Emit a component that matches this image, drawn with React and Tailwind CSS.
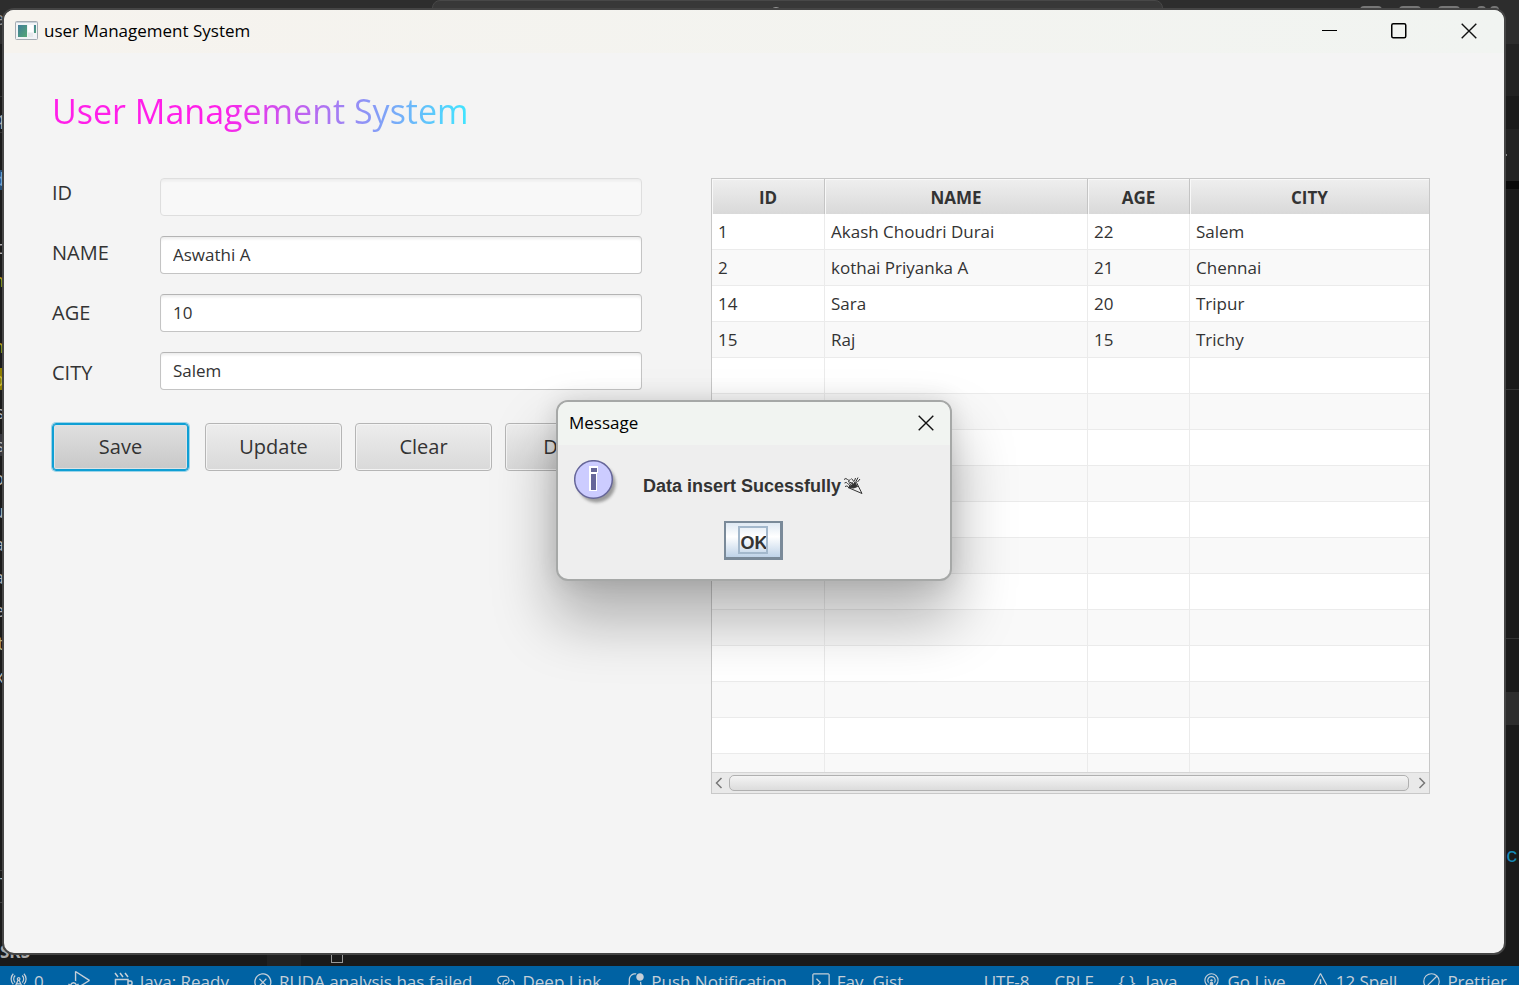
import React from "react";
import {
  VscRadioTower,
  VscDebugAlt,
  VscError,
  VscLink,
  VscBellDot,
  VscTerminal,
  VscBroadcast,
  VscWarning,
  VscCircleSlash,
} from "react-icons/vsc";

const users = [
  { id: "1", name: "Akash Choudri Durai", age: "22", city: "Salem" },
  { id: "2", name: "kothai Priyanka A", age: "21", city: "Chennai" },
  { id: "14", name: "Sara", age: "20", city: "Tripur" },
  { id: "15", name: "Raj", age: "15", city: "Trichy" },
];

const fields = [
  { id: "id", label: "ID", value: "", disabled: true },
  { id: "name", label: "NAME", value: "Aswathi A" },
  { id: "age", label: "AGE", value: "10" },
  { id: "city", label: "CITY", value: "Salem" },
];

const codeEdge = [
  ["c", "text-[#b5b5b5]"],
  ["n", "text-[#b39a1e]"],
  ["", ""],
  ["n", "text-[#b39a1e]"],
  ["p", "bg-[#8f7f00] text-[#c9b83a]"],
  ["s", "text-[#b5b5b5]"],
  ["s", "text-[#b5b5b5] bg-[#37373d]"],
  ["o", "text-[#b5b5b5]"],
  ["u", "text-[#b5b5b5]"],
  ["a", "text-[#b5b5b5]"],
  ["a", "text-[#b5b5b5]"],
  ["e", "text-[#b5b5b5]"],
  ["t", "text-[#b5a878]"],
  ["x", "text-[#b5b5b5]"],
];

function CoffeeIcon() {
  return (
    <svg width="20" height="19" viewBox="0 0 20 19" fill="none" stroke="currentColor" strokeWidth="1.5">
      <path d="M1 1l3 4M6 1l3 4M11 1l3 4M1.500 7.500h12.500v6.500a3 3 0 0 1-3 3h-6.500a3 3 0 0 1-3-3zM14 9h2.500a1.500 1.500 0 0 1 1.500 1.500v1a1.500 1.500 0 0 1-1.500 1.500H14" />
    </svg>
  );
}

function CloseIcon() {
  return (
    <svg width="16" height="16" viewBox="0 0 16 16" fill="none" stroke="#111" strokeWidth="1.4">
      <path d="M.7.7l14.600 14.600M15.300.7L.7 15.300" />
    </svg>
  );
}

function AppIcon() {
  return (
    <svg width="23" height="19" viewBox="0 0 23 19">
      <defs>
        <linearGradient id="pane" x1="0" y1="0" x2="1" y2="1">
          <stop offset="0" stopColor="#3f7d9a" />
          <stop offset="1" stopColor="#56a774" />
        </linearGradient>
      </defs>
      <rect x=".5" y=".5" width="22" height="18" rx="1" fill="#f2f4f6" stroke="#a4abb2" />
      <path d="M1 1.500h21" stroke="#c9d2da" />
      <rect x="3" y="4" width="9" height="12" fill="url(#pane)" />
      <rect x="13" y="4" width="5" height="7" fill="#fff" />
      <rect x="19" y="4" width="2" height="8" fill="url(#pane)" />
      <rect x="13" y="12" width="5" height="4" fill="#e6e9ec" />
    </svg>
  );
}

function InfoIcon() {
  return (
    <svg width="44" height="46" viewBox="0 0 44 46">
      <defs>
        <filter id="soft" x="-20%" y="-20%" width="150%" height="150%">
          <feGaussianBlur stdDeviation="1.800" />
        </filter>
      </defs>
      <circle cx="22.500" cy="23.500" r="19" fill="#777" opacity=".7" filter="url(#soft)" />
      <circle cx="19.500" cy="19.500" r="18.800" fill="#ccccff" stroke="#666699" strokeWidth="1.500" />
      <path d="M15 6h9v7h-1v18h-8z" fill="#fff" />
      <path d="M17 8h6v4h-6zM17 14h5v16h-5z" fill="#666699" />
    </svg>
  );
}

function PartyPopper() {
  return (
    <svg width="20" height="18" viewBox="0 0 20 18" fill="none" stroke="#333" strokeWidth="1">
      <path d="M5 10.500L13.500 5.500l5.500 11z" />
      <path d="M5.500 10.500L12 6l2.500 3.500-4 1.500z" fill="#333" />
      <path d="M1 2.500q2-2 3.500 0t3 0M1.500 6q2-1.500 3 .5t3-.5M2 9.500q2-1 3 0M6 9l4-3.500M8.500 1.500L12 6M12.500 1l-1 3M15 .5l-2.500 5M17 2l-2.500 3M5 4.500l5 2" />
    </svg>
  );
}

function StatusItem({ icon, children }) {
  return (
    <span className="flex items-center gap-1.5 whitespace-nowrap">
      {icon}
      {children}
    </span>
  );
}

function Editor() {
  return (
    <div className="absolute inset-0 flex flex-col overflow-hidden bg-[#1a1a1a]">
      <div className="relative flex h-11 shrink-0 justify-center bg-[#2d2d2d]">
        <span className="absolute left-0 top-2 w-1 overflow-hidden text-[18px] leading-5 text-[#999]">
          <span className="float-right">e</span>
        </span>
        <div className="mr-[-76px] flex h-8 w-[731px] justify-center rounded-lg border border-[#484848] bg-[#383838] pt-1.5">
          <span className="ml-[-44px] size-3 rounded-full border-2 border-[#999]" />
        </div>
        <div className="absolute right-5 top-1.5 flex gap-[17px]">
          <span className="h-5 w-[22px] rounded-sm border-2 border-[#777] bg-linear-to-r from-[#777] from-40% to-transparent to-40%" />
          <span className="h-5 w-[22px] rounded-sm border-2 border-[#777]" />
          <span className="flex h-5 w-[22px] justify-end rounded-sm border-2 border-[#777]">
            <span className="mr-1 w-0.5 bg-[#777]" />
          </span>
          <span className="flex w-[22px] justify-between">
            <span className="size-[9px] rounded-sm border-2 border-[#777]" />
            <span className="size-[9px] rounded-sm border-2 border-[#777]" />
          </span>
        </div>
      </div>
      <div className="flex flex-1 justify-between">
        <div className="flex w-3 flex-col pt-[52px] text-[18px]">
          <div className="flex h-[37px] w-1 items-end justify-end overflow-hidden border-y border-[#333] text-[#b5b5b5]">
            <span>q</span>
          </div>
          <div className="mt-[37px] flex h-[60px] w-1 justify-end overflow-hidden leading-[18px]">
            <span className="h-5 bg-[#264f78] text-[#7fa7cf]">d</span>
          </div>
          {codeEdge.map(([glyph, tone], i) => (
            <div key={i} className="flex h-[33px] w-1 items-center justify-end overflow-hidden">
              <span className={"leading-[22px] " + tone}>{glyph}</span>
            </div>
          ))}
          <div className="mt-[178px] h-[33px] w-3 border-y border-[#3c3c3c] text-[#b5b5b5]">T</div>
        </div>
        <div className="flex w-[15px] flex-col">
          <div className="h-[52px] bg-[#222]" />
          <div className="h-[33px] bg-[#1a1a1a]" />
          <div className="flex h-[52px] items-center bg-[#222]">
            <span className="h-0.5 w-[3px] bg-[#888]" />
          </div>
          <div className="h-2 bg-[#080808]" />
          <div className="h-[200px] bg-[#1a1a1a]" />
          <div className="h-[250px] border-y border-[#333] bg-[#1a1a1a]" />
          <div className="mt-[53px] h-[33px] bg-[#2d2d2d]" />
          <div className="mt-[120px] pl-0.5 font-['Liberation_Mono'] text-[20px] leading-6 text-[#1689b5]">c</div>
        </div>
      </div>
      <div className="flex h-[30px] shrink-0 items-end">
        <span className="w-[267px] pb-[3px] text-[17px] font-bold leading-[22px] text-[#aaa]">SKS</span>
        <span className="h-full w-[34px] bg-[#222]" />
        <span className="mb-[3px] ml-[30px] h-4 w-3 border border-[#999]" />
      </div>
      <footer className="h-[19px] shrink-0 overflow-hidden bg-[#0062a3] text-[17px] text-[#c5cfd8]">
        <div className="flex h-[31px] justify-between pl-2 pr-3">
          <div className="flex gap-6">
            <StatusItem icon={<VscRadioTower size={20} />}>0</StatusItem>
            <StatusItem icon={<VscDebugAlt size={22} />} />
            <StatusItem icon={<CoffeeIcon />}>Java: Ready</StatusItem>
            <StatusItem icon={<VscError size={20} />}>RUDA analysis has failed</StatusItem>
            <StatusItem icon={<VscLink size={20} />}>Deep Link</StatusItem>
            <StatusItem icon={<VscBellDot size={20} />}>Push Notification</StatusItem>
            <StatusItem icon={<VscTerminal size={20} />}>Fav. Gist</StatusItem>
          </div>
          <div className="flex gap-[25px]">
            <StatusItem>UTF-8</StatusItem>
            <StatusItem>CRLF</StatusItem>
            <StatusItem icon={<span className="pr-1">{"{ }"}</span>}>Java</StatusItem>
            <StatusItem icon={<VscBroadcast size={19} />}>Go Live</StatusItem>
            <StatusItem icon={<VscWarning size={19} />}>12 Spell</StatusItem>
            <StatusItem icon={<VscCircleSlash size={19} />}>Prettier</StatusItem>
          </div>
        </div>
      </footer>
    </div>
  );
}

function ActionButton({ children, focused }) {
  return (
    <button
      type="button"
      className={
        "h-12 min-w-0 flex-1 rounded-[4px] border text-xl " +
        (focused
          ? "mr-[3px] border-[#0f9fd4] bg-linear-to-b from-[#e0e0e0] to-[#c8c8c8] shadow-[0_0_0_1px_#9bd3e8,inset_0_0_0_1px_#0f9fd4,inset_0_0_0_2px_#dde3e6]"
          : "border-[#b5b5b5] bg-linear-to-b from-[#ededed] to-[#d9d9d9] shadow-[inset_0_0_0_1px_#f4f4f4]")
      }
    >
      {children}
    </button>
  );
}

function UserForm() {
  return (
    <form className="min-w-0" onSubmit={(e) => e.preventDefault()}>
      <div className="flex">
        <div className="flex w-[108px] shrink-0 flex-col">
          {fields.map((f) => (
            <label key={f.id} htmlFor={f.id} className="h-[60px] text-xl leading-[30px]">
              {f.label}
            </label>
          ))}
        </div>
        <div className="flex min-w-0 flex-1 flex-col gap-5">
          {fields.map((f) => (
            <input
              key={f.id}
              id={f.id}
              type="text"
              defaultValue={f.value}
              disabled={f.disabled}
              className="h-[38px] w-full rounded-[4px] border border-[#c4c4c4] border-t-[#b4b4b4] bg-white px-3 pb-0.5 text-[17px] text-[#333] shadow-[inset_0_3px_3px_-1px_#ececec] disabled:border-[#dedede] disabled:bg-[#f8f8f8]"
            />
          ))}
        </div>
      </div>
      <div className="mt-[5px] flex gap-[13px]">
        <ActionButton focused>Save</ActionButton>
        <ActionButton>Update</ActionButton>
        <ActionButton>Clear</ActionButton>
        <ActionButton>Delete</ActionButton>
      </div>
    </form>
  );
}

const rows = [...users, ...Array.from({ length: 12 }, () => ({ id: "", name: "", age: "", city: "" }))];

function UserTable() {
  return (
    <div className="min-w-0 self-start border border-[#c8c8c8]">
      <div className="h-[593px] overflow-hidden">
        <table className="w-full table-fixed border-separate border-spacing-0 text-[17px]">
          <colgroup>
            <col className="w-[113px]" />
            <col className="w-[263px]" />
            <col className="w-[102px]" />
            <col />
          </colgroup>
          <thead>
            <tr>
              {["ID", "NAME", "AGE", "CITY"].map((h) => (
                <th
                  key={h}
                  className="h-[35px] border-r border-[#c4c4c4] bg-linear-to-b from-[#efefef] to-[#d9d9d9] p-0 pt-0.5 font-bold shadow-[inset_1px_1px_0_#f8f8f8] last:border-r-0"
                >
                  {h}
                </th>
              ))}
            </tr>
          </thead>
          <tbody>
            {rows.map((u, i) => (
              <tr key={i} className="odd:bg-white even:bg-[#f9f9f9]">
                {[u.id, u.name, u.age, u.city].map((v, j) => (
                  <td key={j} className="h-9 border-b border-r border-[#ebebeb] px-[6px] py-0 last:border-r-0">
                    {v}
                  </td>
                ))}
              </tr>
            ))}
          </tbody>
        </table>
      </div>
      <div className="flex h-[21px] items-center gap-1 border-t border-[#d5d5d5] bg-[#e9e9e9] px-[3px]">
        <svg width="10" height="12" viewBox="0 0 10 12" fill="none" stroke="#777" strokeWidth="1.500">
          <path d="M6.500 1L1.500 6l5 5" />
        </svg>
        <div className="h-4 flex-1 rounded-[5px] border border-[#b0b0b0] bg-linear-to-b from-[#f4f4f4] to-[#dcdcdc]" />
        <svg width="13" height="12" viewBox="0 0 13 12" fill="none" stroke="#777" strokeWidth="1.500">
          <path d="M6.500 1l5 5-5 5" />
        </svg>
      </div>
    </div>
  );
}

function MessageDialog() {
  return (
    <div
      role="dialog"
      aria-labelledby="message-title"
      className="absolute left-[556px] top-[400px] w-[396px] overflow-hidden rounded-xl border-2 border-[#a6a8a7] bg-[#eeeeee] shadow-[0_36px_60px_4px_rgba(0,0,0,0.28),0_0_24px_rgba(0,0,0,0.12)]"
    >
      <div className="flex h-[43px] items-center justify-between bg-[#f1f4f1] pb-0.5 pl-[11px] pr-4 text-black">
        <h2 id="message-title" className="text-[17px]">
          Message
        </h2>
        <button type="button" aria-label="Close message">
          <CloseIcon />
        </button>
      </div>
      <div className="flex h-[76px] pl-4 pt-[15px] font-['Liberation_Sans',sans-serif]">
        <InfoIcon />
        <p className="flex h-[52px] items-center gap-0.5 pl-[25px] text-[18px] font-bold text-[#333]">
          Data insert Sucessfully
          <PartyPopper />
        </p>
      </div>
      <div className="flex h-[58px] justify-center pr-0.5">
        <button
          type="button"
          className="flex h-[39px] w-[59px] items-center justify-center border-2 border-b-[3px] border-r-[3px] border-[#7a8a99] bg-linear-to-b from-[#dfe9f3] via-white via-40% to-[#bfd3e8] font-['Liberation_Sans',sans-serif] text-[18px] font-bold text-[#333]"
        >
          <span className="flex h-7 w-[30px] items-end overflow-hidden border-2 border-[#a3b8cc] pl-px leading-[18px]">
            OK
          </span>
        </button>
      </div>
    </div>
  );
}

export default function App() {
  return (
    <main className="relative min-h-screen overflow-hidden font-['Open_Sans',sans-serif] text-[#333]">
      <Editor />
      <div className="relative mb-[30px] ml-0.5 mr-[13px] mt-2 flex h-[calc(100vh-38px)] flex-col overflow-hidden rounded-xl border-2 border-[#454545] bg-[#f4f4f4]">
        <header className="flex h-[43px] shrink-0 items-center gap-1.5 bg-linear-to-r from-[#f6f3ee] to-[#f1f4f1] pb-0.5 pl-[11px] pr-[27px] text-black">
          <AppIcon />
          <span className="flex-1 text-[17px]">user Management System</span>
          <div className="flex items-center gap-[54px]">
            <button type="button" aria-label="Minimize">
              <svg width="16" height="16" viewBox="0 0 16 16">
                <path d="M1 7.500h15" stroke="#000" />
              </svg>
            </button>
            <button type="button" aria-label="Maximize">
              <svg width="16" height="16" viewBox="0 0 16 16" fill="none" stroke="#000" strokeWidth="1.500">
                <rect x=".75" y=".75" width="14" height="14" rx="1.500" />
              </svg>
            </button>
            <button type="button" aria-label="Close window">
              <CloseIcon />
            </button>
          </div>
        </header>
        <div className="px-12 pt-[33px]">
          <h1 className="w-fit bg-linear-to-r/srgb from-[#ff1fe9] from-40% to-[#3fe6ff] bg-clip-text text-[34px] leading-[50px] text-transparent">
            User Management System
          </h1>
        </div>
        <div className="grid grid-cols-[590fr_719fr] gap-[69px] pl-12 pr-[74px] pt-[42px]">
          <UserForm />
          <UserTable />
        </div>
      </div>
      <MessageDialog />
    </main>
  );
}
